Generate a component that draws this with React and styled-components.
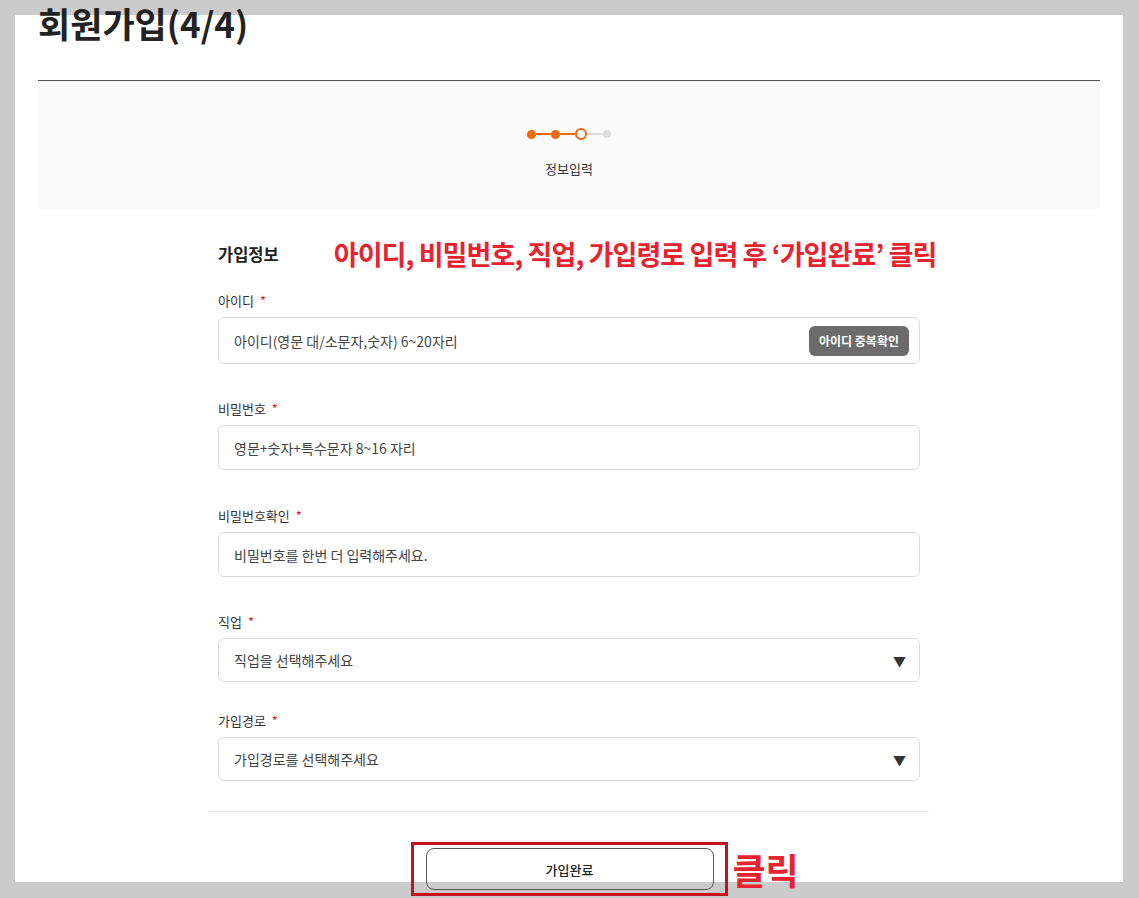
import React from "react"
import styled, { createGlobalStyle } from 'styled-components'

const GlobalStyle = createGlobalStyle`
    body {
        margin: 0;
        background: #cbcbcb;
        font-family: "Noto Sans CJK KR", "Noto Sans", sans-serif;
        color: #222;
    }
    * { box-sizing: border-box; }
`

// white sheet stops at 867px, the button area below hangs over the grey
const Panel = styled.div`
    display: flow-root;
    margin: 15px 16px 0 15px;
    padding: 0 23px 4px;
    background: linear-gradient(#fff, #fff) no-repeat;
    background-size: 100% 867px;
`

const Header = styled.div`
    display: flow-root;
    height: 66px;
    border-bottom: 1px solid #555;
`

const Title = styled.h1`
    margin: -14px 0 0;
    font-size: 35px;
    line-height: 44px;
    font-weight: 700;
    color: #222;
`

const StepBox = styled.div`
    height: 128px;
    background: #fafafa;
    display: flex;
    flex-direction: column;
    align-items: center;
    padding-top: 47px;
`

const Steps = styled.div`
    display: flex;
    align-items: center;
    height: 12px;
`

const Dot = styled.span`
    width: ${p => p.$size}px;
    height: ${p => p.$size}px;
    border-radius: 50%;
    background: ${p => p.$ring ? '#fff' : p.$color};
    border: ${p => p.$ring ? `2px solid ${p.$color}` : 'none'};
`

const Line = styled.span`
    width: ${p => p.$w}px;
    height: 2px;
    background: ${p => p.$color};
`

const StepLabel = styled.div`
    margin-top: 19px;
    font-size: 13px;
    color: #333;
`

const Form = styled.div`
    width: 720px;
    margin: 0 auto;
    padding: 0 9px;
`

const SectionRow = styled.div`
    display: flex;
    align-items: center;
    margin-top: 25px;
    margin-bottom: 19px;
    white-space: nowrap;
`

const SectionTitle = styled.h2`
    margin: 0;
    font-size: 16.5px;
    font-weight: 700;
    color: #222;
`

const Note = styled.span`
    margin-left: 55px;
    font-size: 27px;
    font-weight: 700;
    color: #e8232f;
    letter-spacing: -0.9px;
`

const Field = styled.div`
    margin-bottom: ${p => p.$gap}px;
`

const Label = styled.div`
    font-size: 13px;
    line-height: 18px;
    color: #333;
    margin-bottom: 7px;
`

const Star = styled.span`
    color: #e0201f;
    margin-left: 6px;
`

const Control = styled.div`
    height: ${p => p.$h}px;
    border: 1px solid #dcdcdc;
    border-radius: 6px;
    display: flex;
    align-items: center;
    padding: 0 10px 0 15px;
    font-size: 14px;
    color: #444;
`

const Text = styled.span`
    flex: 1;
`

const DupButton = styled.button`
    height: 30px;
    padding: 0 10px;
    border: 0;
    border-radius: 6px;
    background: #6b6b6b;
    color: #fff;
    font-family: inherit;
    font-size: 12px;
    font-weight: 700;
`

const Arrow = styled.span`
    font-size: 13px;
    color: #333;
    margin-right: 3px;
`

const Divider = styled.div`
    border-top: 1px solid #e6e6e6;
    margin: 0 -9px;
`

const ButtonRow = styled.div`
    display: flex;
    justify-content: center;
    margin-top: 30px;
`

const Highlight = styled.div`
    position: relative;
    width: 317px;
    height: 54px;
    border: 3px solid #c8101e;
    padding: 3px 11px 0 12px;
`

const SubmitButton = styled.button`
    width: 288px;
    height: 42px;
    border: 1px solid #555;
    border-radius: 8px;
    background: transparent;
    font-family: inherit;
    font-size: 13px;
    font-weight: 500;
    color: #222;
`

const ClickNote = styled.span`
    position: absolute;
    left: calc(100% + 8px);
    top: 0;
    font-size: 36px;
    font-weight: 700;
    color: #e8232f;
    line-height: 48px;
    white-space: nowrap;
`

const ORANGE = '#f0690f'
const GREY = '#dcdcdc'

const fields = [
    { label: '아이디', h: 47, gap: 36, text: '아이디(영문 대/소문자,숫자) 6~20자리', dup: true },
    { label: '비밀번호', h: 45, gap: 37, text: '영문+숫자+특수문자 8~16 자리' },
    { label: '비밀번호확인', h: 45, gap: 36, text: '비밀번호를 한번 더 입력해주세요.' },
    { label: '직업', h: 44, gap: 30, text: '직업을 선택해주세요', select: true },
    { label: '가입경로', h: 44, gap: 30, text: '가입경로를 선택해주세요', select: true },
]

const App = () => {
    return (
        <>
            <GlobalStyle />
            <Panel>
                <Header>
                    <Title>회원가입(4/4)</Title>
                </Header>
                <StepBox>
                    <Steps>
                        <Dot $size={9} $color={ORANGE} />
                        <Line $w={15} $color={ORANGE} />
                        <Dot $size={9} $color={ORANGE} />
                        <Line $w={15} $color={ORANGE} />
                        <Dot $size={12} $color={ORANGE} $ring />
                        <Line $w={16} $color={GREY} />
                        <Dot $size={8} $color={GREY} />
                    </Steps>
                    <StepLabel>정보입력</StepLabel>
                </StepBox>
                <Form>
                    <SectionRow>
                        <SectionTitle>가입정보</SectionTitle>
                        <Note>아이디, 비밀번호, 직업, 가입령로 입력 후 ‘가입완료’ 클릭</Note>
                    </SectionRow>
                    {fields.map(f => (
                        <Field key={f.label} $gap={f.gap}>
                            <Label>{f.label}<Star>*</Star></Label>
                            <Control $h={f.h}>
                                <Text>{f.text}</Text>
                                {f.dup && <DupButton>아이디 중복확인</DupButton>}
                                {f.select && <Arrow>▼</Arrow>}
                            </Control>
                        </Field>
                    ))}
                    <Divider />
                    <ButtonRow>
                        <Highlight>
                            <SubmitButton>가입완료</SubmitButton>
                            <ClickNote>클릭</ClickNote>
                        </Highlight>
                    </ButtonRow>
                </Form>
            </Panel>
        </>
    )
}

export default App
